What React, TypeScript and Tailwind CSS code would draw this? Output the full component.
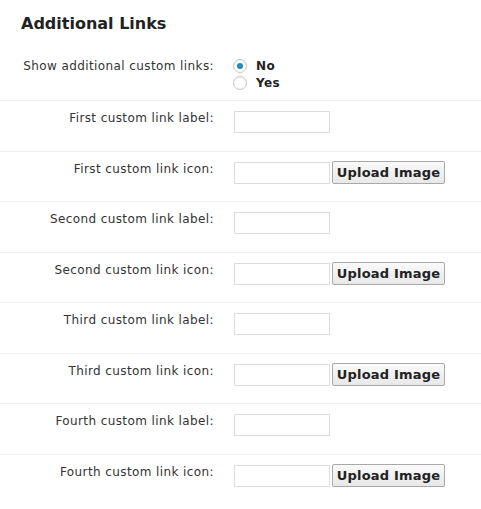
import React from "react";

const FONT = { fontFamily: '"DejaVu Sans", Verdana, sans-serif' };

type Row = { label: string; kind: "text" | "upload" };

const rows: Row[] = [
  { label: "First custom link label:", kind: "text" },
  { label: "First custom link icon:", kind: "upload" },
  { label: "Second custom link label:", kind: "text" },
  { label: "Second custom link icon:", kind: "upload" },
  { label: "Third custom link label:", kind: "text" },
  { label: "Third custom link icon:", kind: "upload" },
  { label: "Fourth custom link label:", kind: "text" },
  { label: "Fourth custom link icon:", kind: "upload" },
];

function Radio({ checked, label }: { checked?: boolean; label: string }) {
  return (
    <div className="flex h-[17px] items-center">
      <span className="flex h-[14px] w-[14px] items-center justify-center rounded-full border border-[#c8c8c8] bg-white shadow-[inset_0_1px_2px_rgba(0,0,0,0.07)]">
        {checked && <span className="h-[6px] w-[6px] rounded-full bg-[#1e8cbe]" />}
      </span>
      <span className="ml-[9px] text-[12px] font-bold tracking-[0.4px] text-[#222]">{label}</span>
    </div>
  );
}

export default function App() {
  return (
    <div className="h-[509px] w-[481px] bg-white" style={FONT}>
      <h2 className="mt-[14px] px-[21px] text-[16px] font-bold leading-[20px] text-[#222]">
        Additional Links
      </h2>

      <div className="flex h-[67px] border-b border-[#eeeeee]">
        <div className="w-[214px] pt-[24px] text-right text-[12px] leading-[16px] tracking-[0.4px] text-[#333]">
          Show additional custom links:
        </div>
        <div className="ml-[19px] pt-[23px]">
          <Radio checked label="No" />
          <Radio label="Yes" />
        </div>
      </div>

      {rows.map((row, i) => (
        <div
          key={row.label}
          className={`flex h-[50.5px] ${i < rows.length - 1 ? "border-b border-[#eeeeee]" : ""}`}
        >
          <div className="w-[214px] pt-[9px] text-right text-[12px] leading-[16px] tracking-[0.4px] text-[#333]">
            {row.label}
          </div>
          <div className="ml-[20px] flex items-start gap-[2px] pt-[10px]">
            <input
              type="text"
              className="h-[22px] w-[96px] border border-[#dddddd] bg-white outline-none"
            />
            {row.kind === "upload" && (
              <button className="-mt-px h-[23px] w-[113px] rounded-[2px] border border-[#a8a8a8] bg-gradient-to-b from-[#fafafa] to-[#e8e8e8] pt-[2px] text-[13px] font-bold leading-[16px] tracking-[0.2px] text-[#222]">
                Upload Image
              </button>
            )}
          </div>
        </div>
      ))}
    </div>
  );
}
